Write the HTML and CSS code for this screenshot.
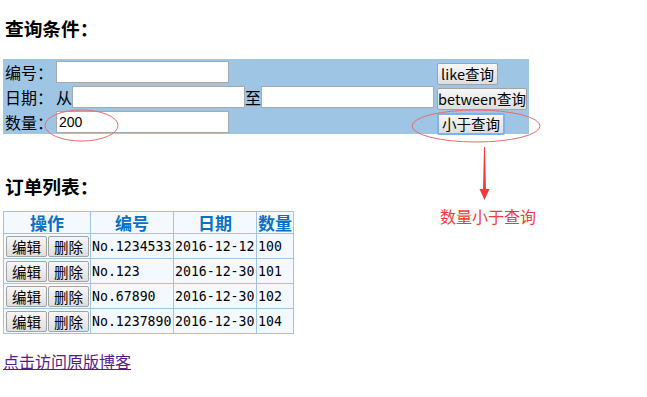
FILE: index.html
```html
<!DOCTYPE html>
<html>
  <head>
    <title>订单查询</title>
    <link rel="stylesheet" href="styles.css">
  </head>
  <body>
    <h3 class="title first">查询条件：</h3>
    <form class="query">
      <div class="query-row"><span class="label">编号：</span><input class="field" type="text"></div>
      <div class="query-btn"><button type="button" class="btn btn-like">like查询</button></div>
      <div class="query-row"><span class="label">日期：</span><span class="word">从</span><input class="field" type="text"><span class="word">至</span><input class="field" type="text"></div>
      <div class="query-btn"><button type="button" class="btn btn-between">between查询</button></div>
      <div class="query-row"><span class="label">数量：</span><input class="field" type="text" value="200"></div>
      <div class="query-btn"><button type="button" class="btn btn-less focused">小于查询</button></div>
    </form>

    <h3 class="title second">订单列表：</h3>
    <table class="orders">
      <tr>
        <th class="col-op">操作</th>
        <th class="col-no">编号</th>
        <th class="col-date">日期</th>
        <th class="col-qty">数量</th>
      </tr>
      <tr>
        <td><div class="ops"><button class="btn small">编辑</button><button class="btn small">删除</button></div></td>
        <td class="mono">No.1234533</td>
        <td class="mono">2016-12-12</td>
        <td class="mono">100</td>
      </tr>
      <tr>
        <td><div class="ops"><button class="btn small">编辑</button><button class="btn small">删除</button></div></td>
        <td class="mono">No.123</td>
        <td class="mono">2016-12-30</td>
        <td class="mono">101</td>
      </tr>
      <tr>
        <td><div class="ops"><button class="btn small">编辑</button><button class="btn small">删除</button></div></td>
        <td class="mono">No.67890</td>
        <td class="mono">2016-12-30</td>
        <td class="mono">102</td>
      </tr>
      <tr>
        <td><div class="ops"><button class="btn small">编辑</button><button class="btn small">删除</button></div></td>
        <td class="mono">No.1237890</td>
        <td class="mono">2016-12-30</td>
        <td class="mono">104</td>
      </tr>
    </table>

    <p class="blog"><a href="#">点击访问原版博客</a></p>

    <!-- annotations drawn over the screenshot -->
    <svg class="marks" width="647" height="397" viewBox="0 0 647 397">
      <ellipse cx="81.5" cy="125.5" rx="36.5" ry="15.5" fill="none" stroke="#e96b6b" stroke-width="1"/>
      <ellipse cx="476" cy="126" rx="64" ry="16" fill="none" stroke="#e96b6b" stroke-width="1"/>
      <polygon points="484,147 485,147 486,191 483,191" fill="#f03a3a"/>
      <polygon points="479.5,189 489.5,189 484.5,200" fill="#f03a3a"/>
    </svg>
    <span class="note">数量小于查询</span>
  </body>
</html>
```

FILE: styles.css
```css
body {
  margin: 0 3px;
  font-family: "Noto Sans CJK SC", sans-serif;
  font-size: 16px;
  color: #000;
  background: #fff;
}

.title {
  font-size: 18.7px;
  line-height: 24px;
  font-weight: bold;
  padding-left: 2px;
}

.title.first {
  margin: 16px 0 19px;
}

.title.second {
  margin: 40px 0 13px;
}

.query {
  display: grid;
  grid-template-columns: 434px 92px;
  grid-auto-rows: 25px;
  width: 526px;
  margin: 0;
  background: #9fc5e5;
}

.query-row {
  display: flex;
  align-items: flex-start;
  padding: 2px 0 0 2px;
  line-height: 22px;
}

.label {
  width: 51px;
  flex-shrink: 0;
}

.word {
  width: 16px;
  flex-shrink: 0;
}

.field {
  width: 173px;
  height: 22px;
  box-sizing: border-box;
  margin: 0;
  padding: 0 2px;
  border: 1px solid #a9a9a9;
  background: #fff;
  font-family: "Liberation Sans", sans-serif;
  font-size: 14px;
}

.query-btn {
  padding-top: 2px;
}

.btn {
  height: 22px;
  box-sizing: border-box;
  margin: 0;
  padding: 0;
  border: 1px solid #a3a3a3;
  border-radius: 2px;
  background: linear-gradient(#f7f7f7, #dedede);
  font-family: "Noto Sans CJK SC", sans-serif;
  font-size: 14.5px;
  line-height: 20px;
  color: #000;
}

.btn-like {
  width: 61px;
}

.btn-between {
  width: 90px;
}

.btn-less {
  width: 68px;
}

.btn.focused {
  border: 2px solid #7db2ea;
  line-height: 18px;
}

.orders {
  border-collapse: collapse;
  border: 1px solid #9fc5e5;
  table-layout: fixed;
  width: 291px;
}

.orders th,
.orders td {
  border: 1px solid #9fc5e5;
  background: #f4f9ff;
  padding: 0 1px;
  white-space: nowrap;
}

.orders th {
  height: 21px;
  font-size: 17px;
  line-height: 21px;
  font-weight: bold;
  color: #0a70c4;
  text-align: center;
}

.orders td {
  height: 24px;
}

.col-op {
  width: 84px;
}

.col-no {
  width: 80px;
}

.col-date {
  width: 80px;
}

.col-qty {
  width: 34px;
}

.ops {
  display: flex;
  gap: 1px;
  padding-left: 1px;
}

.btn.small {
  width: 41px;
  height: 21px;
  font-size: 14.5px;
  line-height: 19px;
}

.mono {
  font-family: "DejaVu Sans Mono", monospace;
  font-size: 13.2px;
}

.blog {
  margin: 17px 0 0;
  line-height: 20px;
}

.blog a {
  color: #551a8b;
}

.marks {
  position: absolute;
  top: 0;
  left: 0;
  pointer-events: none;
}

.note {
  position: absolute;
  top: 206px;
  left: 440px;
  font-size: 16px;
  line-height: 20px;
  color: #f23a3a;
}
```
